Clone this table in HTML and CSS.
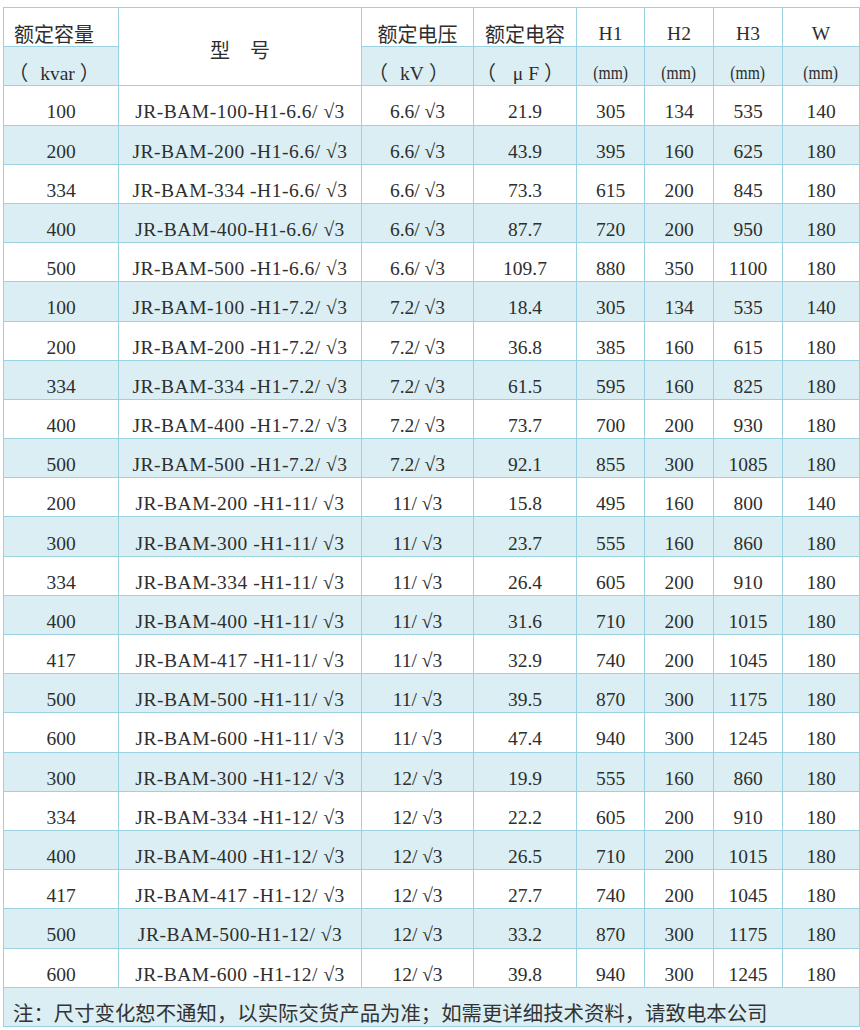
FILE: index.html
```html
<!DOCTYPE html>
<html lang="zh-CN">
<head>
<meta charset="utf-8">
<title>JR-BAM 电容器规格表</title>
<link rel="stylesheet" href="styles.css">
</head>
<body>
<table class="spec">
  <colgroup>
    <col class="c1"><col class="c2"><col class="c3"><col class="c4"><col class="c5"><col class="c6"><col class="c7"><col class="c8">
  </colgroup>
  <thead>
    <tr class="white">
      <th class="cjk first">额定容量</th>
      <th class="cjk model" rowspan="2">型　号</th>
      <th class="cjk">额定电压</th>
      <th class="cjk">额定电容</th>
      <th>H1</th>
      <th>H2</th>
      <th>H3</th>
      <th>W</th>
    </tr>
    <tr class="blue">
      <th class="first unit"><span class="fw l">（</span>kvar<span class="fw r">）</span></th>
      <th class="unit kv"><span class="fw l">（</span>kV<span class="fw r">）</span></th>
      <th class="unit uf"><span class="fw l">（</span> μ F<span class="fw r">）</span></th>
      <th><span class="mm">(mm)</span></th>
      <th><span class="mm">(mm)</span></th>
      <th><span class="mm">(mm)</span></th>
      <th><span class="mm">(mm)</span></th>
    </tr>
  </thead>
  <tbody>
    <tr class="white"><td>100</td><td class="model-no">JR-BAM-100-H1-6.6/ √3</td><td>6.6/ √3</td><td>21.9</td><td>305</td><td>134</td><td>535</td><td>140</td></tr>
    <tr class="blue"><td>200</td><td class="model-no">JR-BAM-200 -H1-6.6/ √3</td><td>6.6/ √3</td><td>43.9</td><td>395</td><td>160</td><td>625</td><td>180</td></tr>
    <tr class="white"><td>334</td><td class="model-no">JR-BAM-334 -H1-6.6/ √3</td><td>6.6/ √3</td><td>73.3</td><td>615</td><td>200</td><td>845</td><td>180</td></tr>
    <tr class="blue"><td>400</td><td class="model-no">JR-BAM-400-H1-6.6/ √3</td><td>6.6/ √3</td><td>87.7</td><td>720</td><td>200</td><td>950</td><td>180</td></tr>
    <tr class="white"><td>500</td><td class="model-no">JR-BAM-500 -H1-6.6/ √3</td><td>6.6/ √3</td><td>109.7</td><td>880</td><td>350</td><td>1100</td><td>180</td></tr>
    <tr class="blue"><td>100</td><td class="model-no">JR-BAM-100 -H1-7.2/ √3</td><td>7.2/ √3</td><td>18.4</td><td>305</td><td>134</td><td>535</td><td>140</td></tr>
    <tr class="white"><td>200</td><td class="model-no">JR-BAM-200 -H1-7.2/ √3</td><td>7.2/ √3</td><td>36.8</td><td>385</td><td>160</td><td>615</td><td>180</td></tr>
    <tr class="blue"><td>334</td><td class="model-no">JR-BAM-334 -H1-7.2/ √3</td><td>7.2/ √3</td><td>61.5</td><td>595</td><td>160</td><td>825</td><td>180</td></tr>
    <tr class="white"><td>400</td><td class="model-no">JR-BAM-400 -H1-7.2/ √3</td><td>7.2/ √3</td><td>73.7</td><td>700</td><td>200</td><td>930</td><td>180</td></tr>
    <tr class="blue"><td>500</td><td class="model-no">JR-BAM-500 -H1-7.2/ √3</td><td>7.2/ √3</td><td>92.1</td><td>855</td><td>300</td><td>1085</td><td>180</td></tr>
    <tr class="white"><td>200</td><td class="model-no">JR-BAM-200 -H1-11/ √3</td><td>11/ √3</td><td>15.8</td><td>495</td><td>160</td><td>800</td><td>140</td></tr>
    <tr class="blue"><td>300</td><td class="model-no">JR-BAM-300 -H1-11/ √3</td><td>11/ √3</td><td>23.7</td><td>555</td><td>160</td><td>860</td><td>180</td></tr>
    <tr class="white"><td>334</td><td class="model-no">JR-BAM-334 -H1-11/ √3</td><td>11/ √3</td><td>26.4</td><td>605</td><td>200</td><td>910</td><td>180</td></tr>
    <tr class="blue"><td>400</td><td class="model-no">JR-BAM-400 -H1-11/ √3</td><td>11/ √3</td><td>31.6</td><td>710</td><td>200</td><td>1015</td><td>180</td></tr>
    <tr class="white"><td>417</td><td class="model-no">JR-BAM-417 -H1-11/ √3</td><td>11/ √3</td><td>32.9</td><td>740</td><td>200</td><td>1045</td><td>180</td></tr>
    <tr class="blue"><td>500</td><td class="model-no">JR-BAM-500 -H1-11/ √3</td><td>11/ √3</td><td>39.5</td><td>870</td><td>300</td><td>1175</td><td>180</td></tr>
    <tr class="white"><td>600</td><td class="model-no">JR-BAM-600 -H1-11/ √3</td><td>11/ √3</td><td>47.4</td><td>940</td><td>300</td><td>1245</td><td>180</td></tr>
    <tr class="blue"><td>300</td><td class="model-no">JR-BAM-300 -H1-12/ √3</td><td>12/ √3</td><td>19.9</td><td>555</td><td>160</td><td>860</td><td>180</td></tr>
    <tr class="white"><td>334</td><td class="model-no">JR-BAM-334 -H1-12/ √3</td><td>12/ √3</td><td>22.2</td><td>605</td><td>200</td><td>910</td><td>180</td></tr>
    <tr class="blue"><td>400</td><td class="model-no">JR-BAM-400 -H1-12/ √3</td><td>12/ √3</td><td>26.5</td><td>710</td><td>200</td><td>1015</td><td>180</td></tr>
    <tr class="white"><td>417</td><td class="model-no">JR-BAM-417 -H1-12/ √3</td><td>12/ √3</td><td>27.7</td><td>740</td><td>200</td><td>1045</td><td>180</td></tr>
    <tr class="blue"><td>500</td><td class="model-no">JR-BAM-500-H1-12/ √3</td><td>12/ √3</td><td>33.2</td><td>870</td><td>300</td><td>1175</td><td>180</td></tr>
    <tr class="white"><td>600</td><td class="model-no">JR-BAM-600 -H1-12/ √3</td><td>12/ √3</td><td>39.8</td><td>940</td><td>300</td><td>1245</td><td>180</td></tr>
    <tr class="blue note-row"><td class="note" colspan="8">注：尺寸变化恕不通知，以实际交货产品为准；如需更详细技术资料，请致电本公司</td></tr>
  </tbody>
</table>
</body>
</html>
```

FILE: styles.css
```css
html, body {
  margin: 0;
  padding: 0;
  background: #ffffff;
}

body {
  padding: 7px 0 0 3px;
}

.spec {
  border-collapse: collapse;
  table-layout: fixed;
  width: 856px;
  font-family: "Liberation Serif", "Noto Sans CJK SC", serif;
  font-size: 19.5px;
  color: #2e2e2e;
}

.c1 { width: 115px; }
.c2 { width: 243px; }
.c3 { width: 112px; }
.c4 { width: 103px; }
.c5 { width: 68px; }
.c6 { width: 69px; }
.c7 { width: 69px; }
.c8 { width: 77px; }

.spec tr {
  height: 39.2px;
}

.spec th,
.spec td {
  border: 1px solid #9ad2e2;
  padding: 14px 0 0;
  line-height: 22px;
  text-align: center;
  vertical-align: middle;
  font-weight: normal;
  white-space: nowrap;
  overflow: hidden;
}

.white { background: #ffffff; }
.blue { background: #daeef4; }

.spec th.first {
  padding-right: 14px;
}

.spec th.kv {
  padding-right: 18px;
}

.spec th.uf {
  padding-right: 10px;
}

.spec th.model {
  background: #ffffff;
  padding-top: 6px;
}

.spec td.model-no {
  letter-spacing: 0.5px;
}

.cjk {
  font-family: "Noto Sans CJK SC", sans-serif;
  font-size: 20px;
}

.fw {
  font-family: "Noto Sans CJK SC", sans-serif;
  font-size: 20px;
}

.fw.l {
  margin-right: 12px;
}

.fw.r {
  margin-left: 5px;
}

.mm {
  display: inline-block;
  transform: scaleX(0.8);
}

.spec td.note {
  text-align: left;
  padding: 10px 0 0 9px;
  font-family: "Noto Sans CJK SC", sans-serif;
  font-size: 20.4px;
  color: #333333;
}
```
